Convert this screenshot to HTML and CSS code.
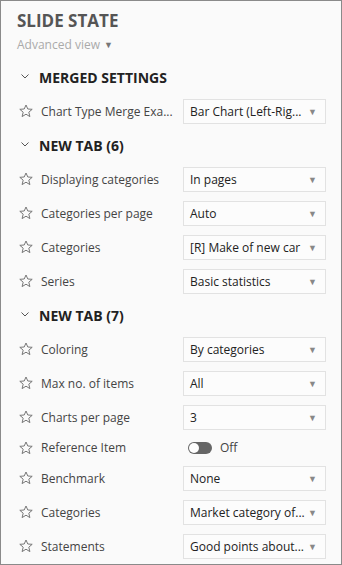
FILE: index.html
```html
<!DOCTYPE html>
<html>
<head>
<meta charset="utf-8">
<link rel="stylesheet" href="styles.css">
</head>
<body>
<div class="panel">
  <div class="title">SLIDE STATE</div>
  <div class="view">Advanced view <span class="caret">▼</span></div>

  <div class="section">
    <svg class="chev" width="8" height="5" viewBox="0 0 8 5"><polyline points="0.5,0.5 4,4 7.5,0.5" fill="none" stroke="#555" stroke-width="1"/></svg>
    <span>MERGED SETTINGS</span>
  </div>
  <div class="row">
    <svg class="star" width="14" height="14" viewBox="0 0 14 14"><polygon points="7,1 8.8,5 13.2,5.3 9.8,8.2 10.9,12.6 7,10.2 3.1,12.6 4.2,8.2 0.8,5.3 5.2,5" fill="none" stroke="#777" stroke-width="1" stroke-linejoin="round"/></svg>
    <span class="label">Chart Type Merge Exa...</span>
    <div class="select"><span>Bar Chart (Left-Rig...</span><i>▼</i></div>
  </div>

  <div class="section">
    <svg class="chev" width="8" height="5" viewBox="0 0 8 5"><polyline points="0.5,0.5 4,4 7.5,0.5" fill="none" stroke="#555" stroke-width="1"/></svg>
    <span>NEW TAB (6)</span>
  </div>
  <div class="row">
    <svg class="star" width="14" height="14" viewBox="0 0 14 14"><polygon points="7,1 8.8,5 13.2,5.3 9.8,8.2 10.9,12.6 7,10.2 3.1,12.6 4.2,8.2 0.8,5.3 5.2,5" fill="none" stroke="#777" stroke-width="1" stroke-linejoin="round"/></svg>
    <span class="label">Displaying categories</span>
    <div class="select"><span>In pages</span><i>▼</i></div>
  </div>
  <div class="row">
    <svg class="star" width="14" height="14" viewBox="0 0 14 14"><polygon points="7,1 8.8,5 13.2,5.3 9.8,8.2 10.9,12.6 7,10.2 3.1,12.6 4.2,8.2 0.8,5.3 5.2,5" fill="none" stroke="#777" stroke-width="1" stroke-linejoin="round"/></svg>
    <span class="label">Categories per page</span>
    <div class="select"><span>Auto</span><i>▼</i></div>
  </div>
  <div class="row">
    <svg class="star" width="14" height="14" viewBox="0 0 14 14"><polygon points="7,1 8.8,5 13.2,5.3 9.8,8.2 10.9,12.6 7,10.2 3.1,12.6 4.2,8.2 0.8,5.3 5.2,5" fill="none" stroke="#777" stroke-width="1" stroke-linejoin="round"/></svg>
    <span class="label">Categories</span>
    <div class="select"><span>[R] Make of new car</span><i>▼</i></div>
  </div>
  <div class="row">
    <svg class="star" width="14" height="14" viewBox="0 0 14 14"><polygon points="7,1 8.8,5 13.2,5.3 9.8,8.2 10.9,12.6 7,10.2 3.1,12.6 4.2,8.2 0.8,5.3 5.2,5" fill="none" stroke="#777" stroke-width="1" stroke-linejoin="round"/></svg>
    <span class="label">Series</span>
    <div class="select"><span>Basic statistics</span><i>▼</i></div>
  </div>

  <div class="section">
    <svg class="chev" width="8" height="5" viewBox="0 0 8 5"><polyline points="0.5,0.5 4,4 7.5,0.5" fill="none" stroke="#555" stroke-width="1"/></svg>
    <span>NEW TAB (7)</span>
  </div>
  <div class="row">
    <svg class="star" width="14" height="14" viewBox="0 0 14 14"><polygon points="7,1 8.8,5 13.2,5.3 9.8,8.2 10.9,12.6 7,10.2 3.1,12.6 4.2,8.2 0.8,5.3 5.2,5" fill="none" stroke="#777" stroke-width="1" stroke-linejoin="round"/></svg>
    <span class="label">Coloring</span>
    <div class="select"><span>By categories</span><i>▼</i></div>
  </div>
  <div class="row">
    <svg class="star" width="14" height="14" viewBox="0 0 14 14"><polygon points="7,1 8.8,5 13.2,5.3 9.8,8.2 10.9,12.6 7,10.2 3.1,12.6 4.2,8.2 0.8,5.3 5.2,5" fill="none" stroke="#777" stroke-width="1" stroke-linejoin="round"/></svg>
    <span class="label">Max no. of items</span>
    <div class="select"><span>All</span><i>▼</i></div>
  </div>
  <div class="row">
    <svg class="star" width="14" height="14" viewBox="0 0 14 14"><polygon points="7,1 8.8,5 13.2,5.3 9.8,8.2 10.9,12.6 7,10.2 3.1,12.6 4.2,8.2 0.8,5.3 5.2,5" fill="none" stroke="#777" stroke-width="1" stroke-linejoin="round"/></svg>
    <span class="label">Charts per page</span>
    <div class="select"><span>3</span><i>▼</i></div>
  </div>
  <div class="row short">
    <svg class="star" width="14" height="14" viewBox="0 0 14 14"><polygon points="7,1 8.8,5 13.2,5.3 9.8,8.2 10.9,12.6 7,10.2 3.1,12.6 4.2,8.2 0.8,5.3 5.2,5" fill="none" stroke="#777" stroke-width="1" stroke-linejoin="round"/></svg>
    <span class="label">Reference Item</span>
    <div class="toggle-wrap"><span class="toggle"><span class="knob"></span></span><span class="off">Off</span></div>
  </div>
  <div class="row">
    <svg class="star" width="14" height="14" viewBox="0 0 14 14"><polygon points="7,1 8.8,5 13.2,5.3 9.8,8.2 10.9,12.6 7,10.2 3.1,12.6 4.2,8.2 0.8,5.3 5.2,5" fill="none" stroke="#777" stroke-width="1" stroke-linejoin="round"/></svg>
    <span class="label">Benchmark</span>
    <div class="select"><span>None</span><i>▼</i></div>
  </div>
  <div class="row">
    <svg class="star" width="14" height="14" viewBox="0 0 14 14"><polygon points="7,1 8.8,5 13.2,5.3 9.8,8.2 10.9,12.6 7,10.2 3.1,12.6 4.2,8.2 0.8,5.3 5.2,5" fill="none" stroke="#777" stroke-width="1" stroke-linejoin="round"/></svg>
    <span class="label">Categories</span>
    <div class="select"><span>Market category of...</span><i>▼</i></div>
  </div>
  <div class="row">
    <svg class="star" width="14" height="14" viewBox="0 0 14 14"><polygon points="7,1 8.8,5 13.2,5.3 9.8,8.2 10.9,12.6 7,10.2 3.1,12.6 4.2,8.2 0.8,5.3 5.2,5" fill="none" stroke="#777" stroke-width="1" stroke-linejoin="round"/></svg>
    <span class="label">Statements</span>
    <div class="select"><span>Good points about...</span><i>▼</i></div>
  </div>
</div>
</body>
</html>
```

FILE: styles.css
```css
* { box-sizing: border-box; }
html, body { margin: 0; padding: 0; }
body {
  font-family: "Open Sans", "Noto Sans", sans-serif;
  background: #fafafa;
}
.panel {
  width: 342px;
  height: 565px;
  border: 1px solid #8a8a8a;
  background: #fafafa;
  padding-top: 8px;
  overflow: hidden;
}
.title {
  font-size: 17px;
  font-weight: 700;
  color: #555;
  line-height: 24px;
  padding-left: 16px;
}
.view {
  font-size: 12px;
  color: #aaa;
  line-height: 20px;
  margin-top: 2px;
  margin-bottom: 5px;
  padding-left: 16px;
}
.view .caret {
  font-size: 9px;
  color: #777;
  vertical-align: 1px;
  margin-left: 1px;
}
.section {
  display: flex;
  align-items: center;
  height: 34px;
  padding-left: 20px;
  font-size: 14px;
  font-weight: 700;
  color: #222;
}
.chev { margin-right: 10px; margin-top: -1px; }
.row {
  display: flex;
  align-items: center;
  height: 34px;
  padding-left: 18px;
  padding-right: 15px;
}
.row.short { height: 27px; }
.star { flex: none; }
.label {
  margin-left: 8px;
  font-size: 12px;
  color: #444;
  flex: 1;
  white-space: nowrap;
  overflow: hidden;
}
.select {
  flex: none;
  width: 143px;
  height: 25px;
  border: 1px solid #e2e2e2;
  background: #fcfcfc;
  display: flex;
  align-items: center;
  justify-content: space-between;
  padding: 0 8px 0 6px;
  font-size: 12px;
  color: #222;
  white-space: nowrap;
}
.select i {
  font-style: normal;
  font-size: 9px;
  color: #888;
}
.toggle-wrap {
  flex: none;
  width: 143px;
  display: flex;
  align-items: center;
  padding-left: 5px;
}
.toggle {
  width: 24px;
  height: 12px;
  border-radius: 6px;
  background: #666;
  position: relative;
  display: inline-block;
}
.knob {
  position: absolute;
  left: 1px;
  top: 1px;
  width: 10px;
  height: 10px;
  border-radius: 50%;
  background: #fff;
}
.off {
  margin-left: 8px;
  font-size: 12px;
  color: #444;
}
```
